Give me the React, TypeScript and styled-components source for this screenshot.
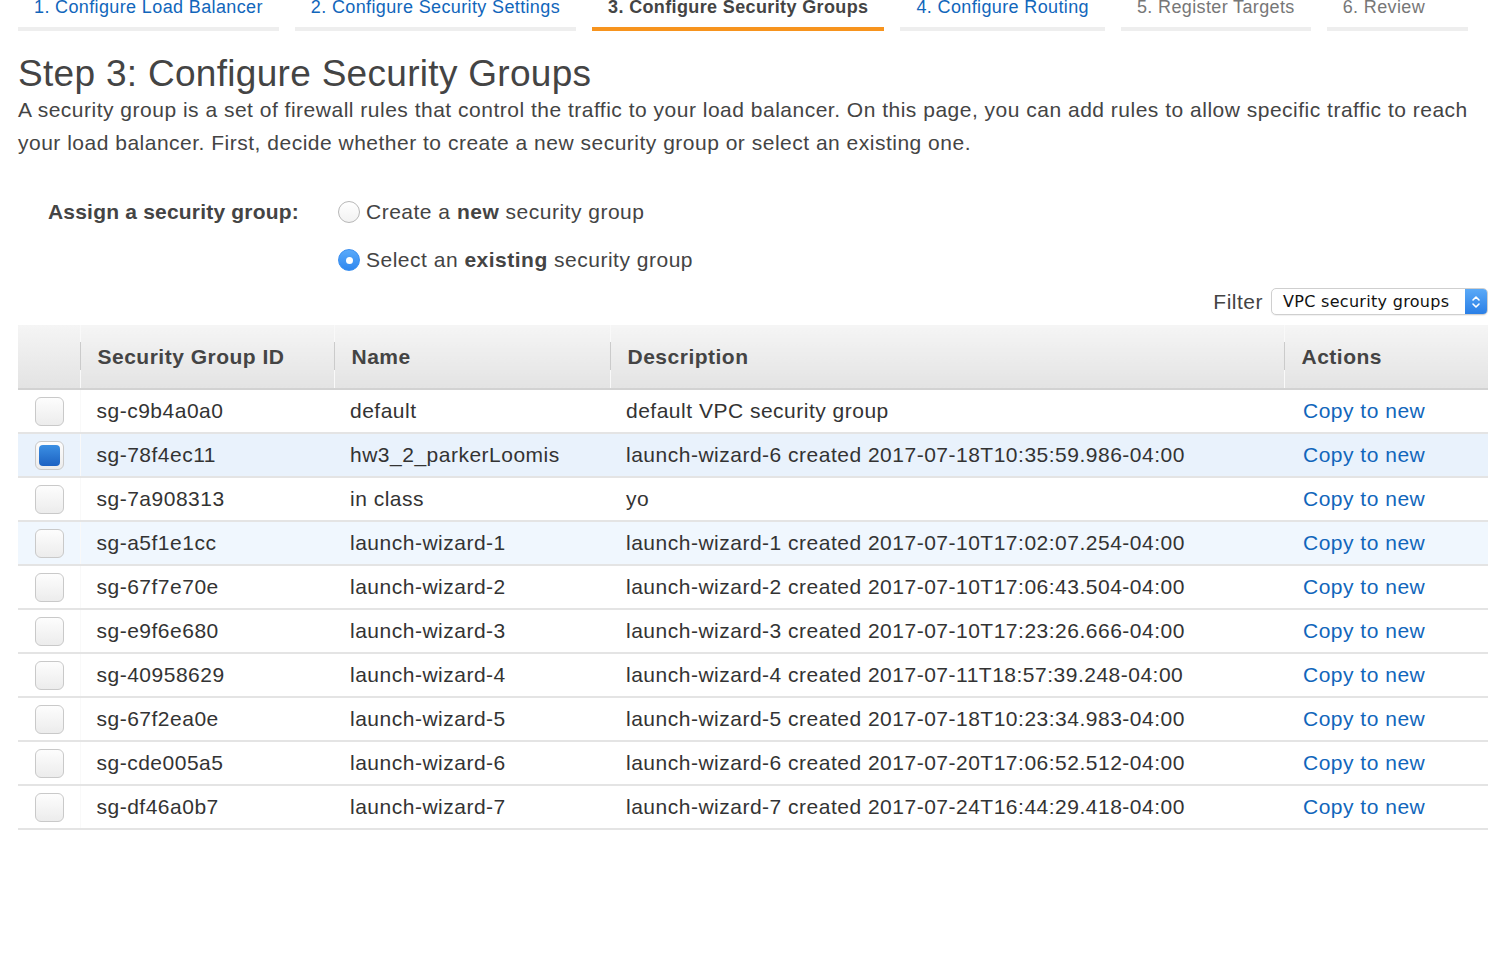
import styled, { createGlobalStyle } from 'styled-components';

const GlobalStyle = createGlobalStyle`
  html, body {
    margin: 0;
    padding: 0;
    background: #fff;
    overflow: hidden;
  }
  body {
    font-family: "Liberation Sans", Arial, sans-serif;
    color: #444;
  }
`;

type Tone = 'link' | 'active' | 'muted';

const steps: { label: string; tone: Tone }[] = [
  { label: '1. Configure Load Balancer', tone: 'link' },
  { label: '2. Configure Security Settings', tone: 'link' },
  { label: '3. Configure Security Groups', tone: 'active' },
  { label: '4. Configure Routing', tone: 'link' },
  { label: '5. Register Targets', tone: 'muted' },
  { label: '6. Review', tone: 'muted' },
];

const groups = [
  { id: 'sg-c9b4a0a0', name: 'default', desc: 'default VPC security group' },
  { id: 'sg-78f4ec11', name: 'hw3_2_parkerLoomis', desc: 'launch-wizard-6 created 2017-07-18T10:35:59.986-04:00', checked: true },
  { id: 'sg-7a908313', name: 'in class', desc: 'yo' },
  { id: 'sg-a5f1e1cc', name: 'launch-wizard-1', desc: 'launch-wizard-1 created 2017-07-10T17:02:07.254-04:00', hover: true },
  { id: 'sg-67f7e70e', name: 'launch-wizard-2', desc: 'launch-wizard-2 created 2017-07-10T17:06:43.504-04:00' },
  { id: 'sg-e9f6e680', name: 'launch-wizard-3', desc: 'launch-wizard-3 created 2017-07-10T17:23:26.666-04:00' },
  { id: 'sg-40958629', name: 'launch-wizard-4', desc: 'launch-wizard-4 created 2017-07-11T18:57:39.248-04:00' },
  { id: 'sg-67f2ea0e', name: 'launch-wizard-5', desc: 'launch-wizard-5 created 2017-07-18T10:23:34.983-04:00' },
  { id: 'sg-cde005a5', name: 'launch-wizard-6', desc: 'launch-wizard-6 created 2017-07-20T17:06:52.512-04:00' },
  { id: 'sg-df46a0b7', name: 'launch-wizard-7', desc: 'launch-wizard-7 created 2017-07-24T16:44:29.418-04:00' },
];

// Helvetica Neue runs wider than Liberation Sans, so body text gets a bit of tracking
const Page = styled.div`
  margin-top: -3px;
  padding: 0 22px 0 18px;
  font-size: 21px;
  letter-spacing: 0.5px;
`;

const StepBar = styled.nav`
  display: flex;
  gap: 16px;
`;

const toneColor: Record<Tone, string> = {
  link: '#1166bb',
  active: '#444',
  muted: '#777',
};

const Step = styled.a<{ $tone: Tone }>`
  display: block;
  min-width: 109px;
  padding: 0 16px 10px;
  font-size: 18px;
  line-height: 20px;
  letter-spacing: 0.37px;
  color: ${(p) => toneColor[p.$tone]};
  font-weight: ${(p) => (p.$tone === 'active' ? 700 : 400)};
  border-bottom: 4px solid ${(p) => (p.$tone === 'active' ? '#f7941e' : '#eeeeee')};
  white-space: nowrap;
  text-decoration: none;
`;

const Title = styled.h1`
  margin: 23px 0 0;
  font-size: 37px;
  line-height: 40px;
  font-weight: 400;
  letter-spacing: 0.3px;
  color: #444;
`;

const Intro = styled.p`
  margin: -1px 0 0;
  line-height: 33px;
  color: #444;
`;

const AssignBlock = styled.div`
  display: grid;
  grid-template-columns: 320px 1fr;
  margin-top: 39px;
`;

const AssignLabel = styled.div`
  padding-left: 30px;
  line-height: 28px;
  font-weight: 700;
  letter-spacing: 0.2px;
  color: #444;
`;

const RadioList = styled.div`
  display: flex;
  flex-direction: column;
  gap: 20px;
`;

const RadioRow = styled.label`
  display: flex;
  align-items: center;
  gap: 6px;
  line-height: 28px;
  color: #444;

  b {
    font-weight: 700;
  }
`;

const RadioDot = styled.span<{ $on?: boolean }>`
  box-sizing: border-box;
  width: 22px;
  height: 22px;
  border-radius: 50%;
  display: flex;
  align-items: center;
  justify-content: center;
  border: 1px solid ${(p) => (p.$on ? '#3a8ff0' : '#b8b8b8')};
  background: ${(p) =>
    p.$on ? 'linear-gradient(#5aaafa, #2f87ef)' : 'linear-gradient(#ffffff, #f2f2f2)'};

  &::after {
    content: '';
    display: ${(p) => (p.$on ? 'block' : 'none')};
    width: 7px;
    height: 7px;
    border-radius: 50%;
    background: #fff;
  }
`;

const FilterRow = styled.div`
  display: flex;
  justify-content: flex-end;
  align-items: center;
  gap: 8px;
  margin-top: 14px;
  color: #444;
`;

const Select = styled.div`
  box-sizing: border-box;
  display: flex;
  align-items: stretch;
  width: 217px;
  height: 27px;
  border: 1px solid #cfcfcf;
  border-radius: 5px;
  background: #fff;
  overflow: hidden;
  box-shadow: 0 1px 1px rgba(0, 0, 0, 0.06);
`;

const SelectText = styled.span`
  flex: 1;
  padding-left: 11px;
  font-family: "DejaVu Sans", sans-serif;
  font-size: 16px;
  line-height: 26px;
  color: #111;
  letter-spacing: 0.3px;
`;

const Stepper = styled.span`
  width: 22px;
  display: flex;
  align-items: center;
  justify-content: center;
  background: linear-gradient(#5aa9f7, #2a7fe6);
`;

const Table = styled.table`
  width: 100%;
  margin-top: 10px;
  border-collapse: collapse;
  table-layout: fixed;
`;

const HeadCell = styled.th<{ $sep?: boolean }>`
  position: relative;
  height: 63px;
  padding: 0 0 0 17px;
  text-align: left;
  font-weight: 700;
  color: #444;
  background: linear-gradient(#f5f5f5, #e3e3e3);
  border-bottom: 2px solid #d2d2d2;
  border-left: ${(p) => (p.$sep ? '1px solid #f9f9f9' : 'none')};

  &::before {
    content: '';
    display: ${(p) => (p.$sep ? 'block' : 'none')};
    position: absolute;
    left: -1px;
    top: 17px;
    width: 1px;
    height: 28px;
    background: #cbcbcb;
  }
`;

const Row = styled.tr<{ $state?: 'selected' | 'hover' }>`
  background: ${(p) =>
    p.$state === 'selected' ? '#e9f2fc' : p.$state === 'hover' ? '#f0f7fe' : '#fff'};
  border-bottom: 2px solid #e4e4e4;
`;

const Cell = styled.td<{ $pad?: number }>`
  height: 42px;
  padding: 0 0 0 ${(p) => p.$pad ?? 16}px;
  color: #333;
  white-space: nowrap;
  overflow: hidden;
`;

const CheckCell = styled.td`
  height: 42px;
  padding: 0 0 0 1px;
  text-align: center;
  border-right: 1px solid rgba(0, 0, 0, 0.025);
`;

const Box = styled.span<{ $on?: boolean }>`
  box-sizing: border-box;
  display: inline-flex;
  align-items: center;
  justify-content: center;
  vertical-align: middle;
  width: 29px;
  height: 29px;
  border-radius: 6px;
  border: 1px solid #c9c9c9;
  background: linear-gradient(#fdfdfd, #ececec);

  &::after {
    content: '';
    display: ${(p) => (p.$on ? 'block' : 'none')};
    width: 21px;
    height: 21px;
    border-radius: 4px;
    background: linear-gradient(#3b8fe3, #1d62c2);
  }
`;

const Link = styled.a`
  color: #1166bb;
  text-decoration: none;
`;

export default function App() {
  return (
    <>
      <GlobalStyle />
      <Page>
        <StepBar>
          {steps.map((s) => (
            <Step key={s.label} $tone={s.tone}>
              {s.label}
            </Step>
          ))}
        </StepBar>

        <Title>Step 3: Configure Security Groups</Title>
        <Intro>
          A security group is a set of firewall rules that control the traffic to your load balancer. On this page, you
          can add rules to allow specific traffic to reach your load balancer. First, decide whether to create a new
          security group or select an existing one.
        </Intro>

        <AssignBlock>
          <AssignLabel>Assign a security group:</AssignLabel>
          <RadioList>
            <RadioRow>
              <RadioDot />
              <span>
                Create a <b>new</b> security group
              </span>
            </RadioRow>
            <RadioRow>
              <RadioDot $on />
              <span>
                Select an <b>existing</b> security group
              </span>
            </RadioRow>
          </RadioList>
        </AssignBlock>

        <FilterRow>
          <span>Filter</span>
          <Select>
            <SelectText>VPC security groups</SelectText>
            <Stepper>
              <svg width="10" height="16" viewBox="0 0 10 16" fill="none" stroke="#fff" strokeWidth="1.6" strokeLinecap="round" strokeLinejoin="round">
                <path d="M2 6 L5 3 L8 6" />
                <path d="M2 10 L5 13 L8 10" />
              </svg>
            </Stepper>
          </Select>
        </FilterRow>

        <Table>
          <colgroup>
            <col style={{ width: 62 }} />
            <col style={{ width: 254 }} />
            <col style={{ width: 276 }} />
            <col style={{ width: 674 }} />
            <col />
          </colgroup>
          <thead>
            <tr>
              <HeadCell />
              <HeadCell $sep>Security Group ID</HeadCell>
              <HeadCell $sep>Name</HeadCell>
              <HeadCell $sep>Description</HeadCell>
              <HeadCell $sep>Actions</HeadCell>
            </tr>
          </thead>
          <tbody>
            {groups.map((g) => (
              <Row key={g.id} $state={g.checked ? 'selected' : g.hover ? 'hover' : undefined}>
                <CheckCell>
                  <Box $on={g.checked} />
                </CheckCell>
                <Cell>{g.id}</Cell>
                <Cell>{g.name}</Cell>
                <Cell>{g.desc}</Cell>
                <Cell $pad={19}>
                  <Link>Copy to new</Link>
                </Cell>
              </Row>
            ))}
          </tbody>
        </Table>
      </Page>
    </>
  );
}
